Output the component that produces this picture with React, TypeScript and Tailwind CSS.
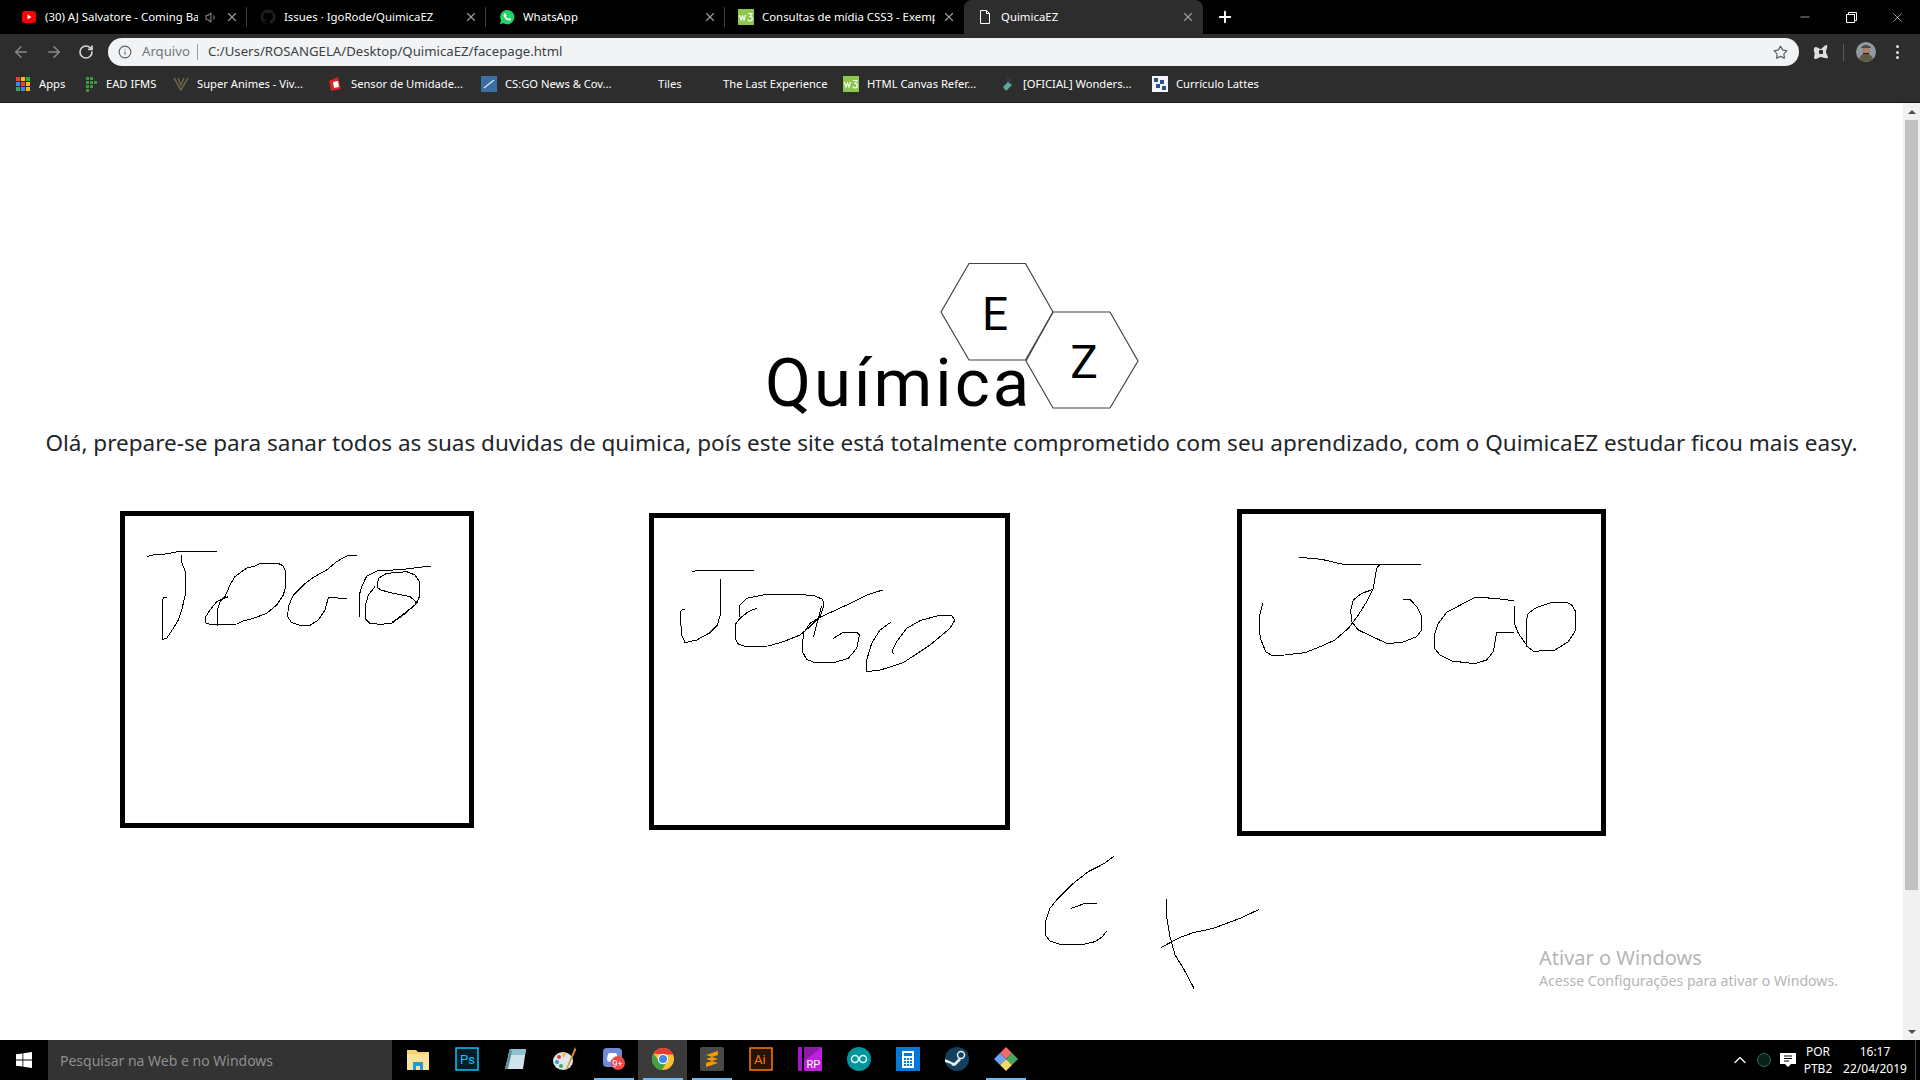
import { ArrowLeft, ArrowRight, RotateCw, Info, Star, X, Plus, Minus, ChevronUp, Volume1 } from "lucide-react";
import type { ReactNode } from "react";

const UI_FONT = "font-['Noto_Sans','Open_Sans',sans-serif]";

// icones pequenos das abas e favoritos
function Youtube() {
  return (
    <svg width="16" height="16" viewBox="0 0 16 16">
      <rect x="1" y="2" width="14" height="12" rx="3" fill="#f00" />
      <path d="M6.5 5.5v5l4-2.5z" fill="#fff" />
    </svg>
  );
}

function Github() {
  return (
    <svg width="16" height="16" viewBox="0 0 16 16" fill="#1e1e1e">
      <path d="M8 .5a7.5 7.5 0 0 0-2.4 14.6c.4.1.5-.2.5-.4v-1.3c-2.1.5-2.500-1-2.500-1-.4-.9-.9-1.100-.9-1.100-.7-.5 0-.5 0-.5.8 0 1.200.8 1.200.8.700 1.200 1.800.8 2.300.6 0-.5.3-.9.5-1.100-1.700-.2-3.400-.8-3.400-3.700 0-.8.3-1.500.8-2-.1-.2-.3-1 .1-2 0 0 .6-.2 2.100.8a7 7 0 0 1 3.800 0c1.500-1 2.100-.8 2.100-.8.400 1 .2 1.800.1 2 .5.500.8 1.200.8 2 0 2.900-1.800 3.500-3.400 3.700.3.200.5.700.5 1.400v2.100c0 .2.100.5.500.4A7.500 7.500 0 0 0 8 .5z" />
    </svg>
  );
}

function Whatsapp() {
  return (
    <svg width="18" height="18" viewBox="0 0 18 18">
      <path d="M1 17l1.200-4.300A8 8 0 1 1 5.300 16z" fill="#25d366" />
      <path d="M6.500 4.800c-.5 0-1.300.7-1.300 2 0 2.700 3.500 6.200 6.300 6.200 1.300 0 2.100-.9 2.100-1.500 0-.4-1.700-1.300-2-1.300s-.7.800-1 .800c-.8 0-2.900-2-2.900-2.800 0-.3.700-.7.700-1 0-.4-.8-2.400-1.900-2.400z" fill="#fff" />
    </svg>
  );
}

function W3({ size = 16 }: { size?: number }) {
  return (
    <svg width={size} height={size} viewBox="0 0 16 16">
      <rect width="16" height="16" fill="#8cc84b" />
      <path d="M1.500 6l1.500 5 1.500-4 1.500 4 1.500-5M10 4.500h4l-2 3c1.500 0 2.300 1 2.300 2.300s-1 2.200-2.300 2.200-2-.7-2.200-1.500" fill="none" stroke="#fff" strokeWidth="1.100" />
    </svg>
  );
}

function Doc() {
  return (
    <svg width="16" height="16" viewBox="0 0 16 16" fill="none" stroke="#fff" strokeWidth="1">
      <path d="M3.500 1.500h6l3 3v10h-9zM9.500 1.500v3h3" />
    </svg>
  );
}

function Tab({ icon, title, active, sep, mute }: { icon: ReactNode; title: string; active?: boolean; sep?: boolean; mute?: boolean }) {
  return (
    <div
      className={`flex h-[34px] w-[239px] items-center gap-[7px] pl-[13px] text-[11.4px] text-white ${
        active ? "rounded-t-lg bg-[#2d2d2d]" : ""
      }`}
    >
      <span className="flex w-[16px] shrink-0 justify-center">{icon}</span>
      <span className="ml-[1px] flex-1 overflow-hidden whitespace-nowrap">{title}</span>
      {mute && <Volume1 size={13} className="text-[#888]" />}
      <X size={14} className="shrink-0 text-[#9a9a9a]" strokeWidth={2} />
      <span className="-ml-[7px] flex w-[8px] shrink-0 justify-end">
        {sep && <span className="h-[20px] w-px bg-[#3f3f3f]" />}
      </span>
    </div>
  );
}

function TabStrip() {
  return (
    <div className="flex h-[34px] items-center bg-black pl-[8px]">
      <Tab icon={<Youtube />} title="(30) AJ Salvatore - Coming Back" sep mute />
      <Tab icon={<Github />} title="Issues · IgoRode/QuimicaEZ" sep />
      <Tab icon={<Whatsapp />} title="WhatsApp" sep />
      <Tab icon={<W3 />} title="Consultas de mídia CSS3 - Exemplos" />
      <Tab icon={<Doc />} title="QuimicaEZ" active />
      <Plus size={18} strokeWidth={2.5} className="ml-[13px] text-white" />
      <div className="ml-auto flex items-center text-white">
        <span className="flex w-[46px] justify-center"><Minus size={14} strokeWidth={1} /></span>
        <span className="flex w-[46px] justify-center">
          <svg width="11" height="11" viewBox="0 0 11 11" fill="none" stroke="#fff">
            <path d="M.5 2.500h8v8h-8zM2.500 2.500v-2h8v8h-2" />
          </svg>
        </span>
        <span className="flex w-[46px] justify-center"><X size={15} strokeWidth={1} /></span>
      </div>
    </div>
  );
}

function Toolbar() {
  return (
    <div className="flex h-[34px] items-center bg-[#2d2d2d] pl-[12px] pt-[2px]">
      <ArrowLeft size={18} className="text-[#8a8a8a]" />
      <ArrowRight size={18} className="ml-[15px] text-[#8a8a8a]" />
      <RotateCw size={16} strokeWidth={2.5} className="ml-[15px] text-[#d5d5d5]" />
      <div className="ml-[14px] flex h-[28px] w-[1691px] items-center rounded-full bg-[#f1f3f4] pl-[10px] pr-[11px] text-[13px]">
        <Info size={14} className="text-[#5f6368]" />
        <span className="ml-[10px] text-[13.2px] text-[#70757a]">Arquivo</span>
        <span className="ml-[7px] h-[16px] w-px bg-[#9aa0a6]" />
        <span className="ml-[10px] text-[13.2px] text-[#3c4043]">C:/Users/ROSANGELA/Desktop/QuimicaEZ/facepage.html</span>
        <Star size={15} className="ml-auto text-[#5f6368]" />
      </div>
      <svg width="18" height="18" viewBox="0 0 18 18" className="ml-[13px]">
        <path d="M3 4c3 0 4 2 6 2 2-1 3-4 6-4 1 2-1 5-1 7s2 3 2 6c-3 1-5-1-7-1s-3 2-6 2c-2-1 0-4-.5-6S1 6 3 4z" fill="#ddd" />
        <rect x="7" y="7" width="4" height="4" rx="1" fill="#2d2d2d" />
      </svg>
      <span className="ml-[13px] h-[17px] w-px bg-[#5a5a5a]" />
      <svg width="20" height="20" viewBox="0 0 20 20" className="ml-[12px]">
        <circle cx="10" cy="10" r="10" fill="#8f9aa5" />
        <path d="M3 17c1-4 4-5 7-5s6 1 7 5a10 10 0 0 1-14 0z" fill="#5d5c42" />
        <circle cx="10" cy="9" r="4" fill="#a9816b" />
        <path d="M5 6c1-4 9-4 10 0z" fill="#4a4d3b" />
        <path d="M7 11h6v1.500H7z" fill="#2b1f1a" />
      </svg>
      <span className="ml-[20px] flex flex-col gap-[2.500px]">
        <span className="h-[3px] w-[3px] rounded-full bg-[#ddd]" />
        <span className="h-[3px] w-[3px] rounded-full bg-[#ddd]" />
        <span className="h-[3px] w-[3px] rounded-full bg-[#ddd]" />
      </span>
    </div>
  );
}

const APPS_COLORS = ["#ea4335", "#fbbc05", "#34a853", "#4285f4", "#ea4335", "#fbbc05", "#34a853", "#4285f4", "#fbbc05"];

function AppsIcon() {
  return (
    <span className="grid grid-cols-3 gap-[1px]">
      {APPS_COLORS.map((c, i) => (
        <span key={i} className="h-[4px] w-[4px]" style={{ backgroundColor: c }} />
      ))}
    </span>
  );
}

const BOOKMARKS: { w: string; label: string; icon?: ReactNode }[] = [
  { w: "w-[67px]", label: "Apps", icon: <AppsIcon /> },
  {
    w: "w-[91px]",
    label: "EAD IFMS",
    icon: (
      <svg width="14" height="16" viewBox="0 0 14 16" fill="#3c9a3f">
        <path d="M3 1h3v3H3zM7 1h3v3H7zM3 5h3v3H3zM7 5h3v3H7zM11 5h3v3h-3zM3 9h3v3H3zM7 9h3v3H7zM3 13h3v3H3z" />
      </svg>
    ),
  },
  {
    w: "w-[154px]",
    label: "Super Animes - Viv...",
    icon: (
      <svg width="16" height="16" viewBox="0 0 16 16" fill="none" stroke="#6d6444" strokeWidth="1.500">
        <path d="M1 2l7 12 7-12M5 2l3 7 3-7" />
      </svg>
    ),
  },
  {
    w: "w-[154px]",
    label: "Sensor de Umidade...",
    icon: (
      <svg width="16" height="16" viewBox="0 0 16 16">
        <path d="M2 5l9-4 3 12-10 2z" fill="#d8232a" />
        <path d="M6 6l5-1 1 6-5 1z" fill="#fff" />
      </svg>
    ),
  },
  {
    w: "w-[177px]",
    label: "CS:GO News & Cov...",
    icon: (
      <svg width="16" height="16" viewBox="0 0 16 16">
        <rect width="16" height="16" fill="#3a6ea5" />
        <path d="M3 12l10-8" stroke="#dfe8f2" strokeWidth="1.300" />
      </svg>
    ),
  },
  { w: "w-[65px]", label: "Tiles" },
  { w: "w-[120px]", label: "The Last Experience" },
  { w: "w-[156px]", label: "HTML Canvas Refer...", icon: <W3 /> },
  {
    w: "w-[153px]",
    label: "[OFICIAL] Wonders...",
    icon: (
      <svg width="16" height="16" viewBox="0 0 16 16">
        <path d="M8 1l5 4-5 4z" fill="#2f3d4a" />
        <path d="M9 6l4 3-6 6-3-4z" fill="#5da89c" />
      </svg>
    ),
  },
  {
    w: "w-[110px]",
    label: "Currículo Lattes",
    icon: (
      <svg width="16" height="16" viewBox="0 0 16 16">
        <rect width="16" height="16" fill="#f4f6fa" />
        <path d="M2 2h4v4H2zM8 4h4v4H8zM4 8h4v4H4zM10 10h4v4h-4z" fill="#27508f" />
      </svg>
    ),
  },
];

function BookmarksBar() {
  return (
    <div className="flex h-[35px] items-center border-b border-[#1b1b1b] bg-[#2d2d2d] pb-[2px] pl-[15px] text-[11.2px] text-white">
      {BOOKMARKS.map((b) => (
        <div key={b.label} className={`flex shrink-0 items-center gap-[8px] ${b.w}`}>
          {b.icon && <span className="flex w-[16px] justify-center">{b.icon}</span>}
          <span className="whitespace-nowrap">{b.label}</span>
        </div>
      ))}
    </div>
  );
}

function Logo() {
  return (
    <svg width="400" height="155" viewBox="760 260 400 155" className="ml-[760px] block overflow-visible">
      <path d="M969 263.500h56.500L1053 312l-27.500 48H969l-28-48z" fill="none" stroke="#444" strokeWidth="1.200" />
      <path d="M1053 312h57l28 49-28 47h-57l-27-47z" fill="none" stroke="#444" strokeWidth="1.200" />
      <text x="995" y="330" textAnchor="middle" fontFamily="Roboto, sans-serif" fontSize="46" fill="#000">E</text>
      <text x="1084" y="378" textAnchor="middle" fontFamily="Roboto, sans-serif" fontSize="46" fill="#000">Z</text>
      <text x="765" y="406" fontFamily="Roboto, sans-serif" fontSize="67" letterSpacing="3" fill="#000">Química</text>
    </svg>
  );
}

function Sketch({ box, view, children }: { box: string; view: string; children: ReactNode }) {
  return (
    <div className={`shrink-0 border-[5px] border-black ${box}`}>
      <svg viewBox={view} className="block h-full w-full" fill="none" stroke="#000" strokeWidth="3" shapeRendering="crispEdges">
        {children}
      </svg>
    </div>
  );
}

function Page() {
  return (
    <main className={`min-w-0 flex-1 overflow-hidden bg-white pt-[157px] ${UI_FONT}`}>
      <Logo />
      <p className="mt-[10px] whitespace-nowrap text-center text-[22.5px] leading-[36px] text-[#212529]">
        Olá, prepare-se para sanar todos as suas duvidas de quimica, poís este site está totalmente comprometido com seu aprendizado, com o QuimicaEZ estudar ficou mais easy.
      </p>
      <div className="mt-[48px] flex items-start pl-[120px]">
        <Sketch box="mt-[2px] h-[317px] w-[354px]" view="45 48 1032 921">
          <path d="M110 170L130 165L165 162L205 155L320 154" />
          <path d="M213 165L216 190L226 215L226 285L215 330L205 360L190 385L170 415L157 418L157 300L162 292L170 291" />
          <path d="M355 290L320 305L300 330L286 352L288 370L300 373L380 372L400 363L430 355L470 340L500 315L520 285L527 260L527 215L520 198L505 190L450 190L430 200L412 203L395 215L375 230L360 255L345 290L330 305L322 330L322 378" />
          <path d="M740 166L710 168L680 185L650 210L610 232L580 255L550 285L535 320L533 350L545 368L570 376L600 376L625 360L645 330L655 293L710 295" />
          <path d="M962 198L880 208L800 213L770 228L755 260L748 285L748 350" />
          <path d="M795 260L775 285L765 320L765 355L780 370L810 373L845 370L880 345L920 310L928 290L928 245L915 225L890 215L830 220L805 235L802 262L812 270L850 280L900 290L918 305L915 315L870 350L845 368" />
        </Sketch>
        <Sketch box="ml-[175px] mt-[4px] h-[317px] w-[361px]" view="42 54 1053 921">
          <path d="M157 216L170 211L342 211" />
          <path d="M242 236L242 340L232 375L210 398L170 420L135 428L125 405L120 340L125 330L135 327" />
          <path d="M352 324L325 335L300 355L285 375L285 415L295 432L315 439L385 438L430 425L480 405L510 380L540 350L552 315L548 298L525 288L480 283L375 284L320 295L300 315L299 350" />
          <path d="M728 270L680 285L620 315L540 352L510 370L490 400L487 455L500 478L525 488L585 487L625 475L650 445L658 405L650 397L610 397L580 415" />
          <path d="M545 318L535 355L520 412" />
          <path d="M752 367L720 390L695 430L680 480L680 514L715 512L790 488L870 435L930 385L945 360L935 347L890 348L840 362L800 385L770 425L757 450L760 463" />
        </Sketch>
        <Sketch box="ml-[227px] h-[327px] w-[369px]" view="51 42 1077 951">
          <path d="M222 172L290 178L350 192L588 192" />
          <path d="M463 195L455 205L445 265L425 305L400 345L370 385L330 420L290 438L240 458L180 465L140 466L122 455L108 420L103 395L103 350L113 310" />
          <path d="M445 268L410 280L385 300L377 330L380 365L400 390L485 430L530 428L575 410L590 390L590 350L575 320L555 298L532 297" />
          <path d="M866 302L810 295L750 292L665 337L640 370L628 405L628 445L645 465L680 483L750 491L785 480L805 455L815 398L866 398" />
          <path d="M868 318L870 375L880 400L908 440L925 454L990 450L1030 425L1050 395L1052 335L1040 315L1025 307L980 307L935 322L910 340L904 360L904 440" />
        </Sketch>
      </div>
      <svg width="260" height="160" viewBox="0 0 780 480" fill="none" stroke="#000" strokeWidth="3" shapeRendering="crispEdges" className="ml-[1020px] mt-[4px] block">
        <path d="M283 48L250 72L205 95L160 130L110 180L90 205L76 245L76 285L90 303L120 313L190 313L225 305L245 292L260 274" />
        <path d="M153 205L190 192L233 189" />
        <path d="M438 177L440 230L450 290L465 345L490 385L522 445" />
        <path d="M424 322L480 292L520 278L580 265L660 235L718 208" />
      </svg>
    </main>
  );
}

function Scrollbar() {
  return (
    <div className="flex w-[17px] shrink-0 flex-col items-center bg-[#f1f1f1]">
      <div className="flex h-[17px] items-center justify-center">
        <span className="h-0 w-0 border-x-[4px] border-b-[4px] border-x-transparent border-b-[#505050]" />
      </div>
      <div className="h-[770px] w-[13px] bg-[#c1c1c1]" />
      <div className="mt-auto flex h-[17px] items-center justify-center">
        <span className="h-0 w-0 border-x-[4px] border-t-[4px] border-x-transparent border-t-[#505050]" />
      </div>
    </div>
  );
}

const TASK_ICONS: { key: string; icon: ReactNode; on?: boolean; active?: boolean }[] = [
  {
    key: "explorer",
    icon: (
      <svg width="24" height="24" viewBox="0 0 24 24">
        <path d="M1 3h9l2 2h11v18H1z" fill="#f6d36b" />
        <path d="M1 7h22v16H1z" fill="#fbe49a" />
        <path d="M7 15h10v8h-3v-4h-4v4H7z" fill="#1e9be0" />
      </svg>
    ),
  },
  {
    key: "ps",
    icon: (
      <svg width="24" height="24" viewBox="0 0 24 24">
        <rect x="1" y="1" width="22" height="22" fill="#001d26" stroke="#00c8ff" strokeWidth="1.500" />
        <text x="5" y="17" fontSize="13" fontFamily="Roboto, sans-serif" fill="#00c8ff">Ps</text>
      </svg>
    ),
  },
  {
    key: "notepad",
    icon: (
      <svg width="24" height="24" viewBox="0 0 24 24">
        <path d="M6 2h16l-3 20H1z" fill="#cfe3ea" />
        <path d="M6 2h16l-1 6H4z" fill="#8fc0cf" />
        <path d="M1 22L6 2l2 2-4 18z" fill="#5c8c9b" />
      </svg>
    ),
  },
  {
    key: "paint",
    icon: (
      <svg width="26" height="26" viewBox="0 0 26 26">
        <ellipse cx="11" cy="15" rx="10" ry="9" fill="#dfe6ea" />
        <circle cx="7" cy="11" r="2" fill="#e23b3b" />
        <circle cx="12" cy="9" r="2" fill="#f2c230" />
        <circle cx="5" cy="16" r="2" fill="#2f9ae0" />
        <circle cx="9" cy="20" r="2" fill="#3aaf52" />
        <path d="M23 1l1 3-9 20-1-1z" fill="#d69339" />
      </svg>
    ),
  },
  {
    key: "discord",
    on: true,
    icon: (
      <span className="relative block h-[24px] w-[24px]">
        <svg width="22" height="22" viewBox="0 0 22 22">
          <rect x="1" y="1" width="19" height="19" rx="4" fill="#7289da" />
          <path d="M5 13c0-3 1-6 2-7h7c1 1 2 4 2 7-1 1-2 2-3 2l-1-2H9l-1 2c-1 0-2-1-3-2z" fill="#fff" />
        </svg>
        <span className="absolute left-[9px] top-[9px] flex h-[14px] w-[14px] items-center justify-center rounded-full bg-[#f04747] text-[9px] leading-none text-white">9+</span>
      </span>
    ),
  },
  {
    key: "chrome",
    on: true,
    active: true,
    icon: (
      <svg width="24" height="24" viewBox="0 0 24 24">
        <circle cx="12" cy="12" r="11" fill="#fbc02d" />
        <path d="M2.500 6.500A11 11 0 0 1 22 7.500H12z" fill="#e53935" />
        <path d="M2.500 6.500A11 11 0 0 0 11 23l5-8.500-8-.5z" fill="#43a047" />
        <circle cx="12" cy="12" r="5.200" fill="#fff" />
        <circle cx="12" cy="12" r="4" fill="#4285f4" />
      </svg>
    ),
  },
  {
    key: "sublime",
    on: true,
    icon: (
      <svg width="24" height="24" viewBox="0 0 24 24">
        <rect width="24" height="24" rx="2" fill="#4a4a4a" />
        <path d="M6 8l12-4v4L6 12zM18 12L6 8v4l12 4zM6 16l12-4v4L6 20z" fill="#ff9800" />
      </svg>
    ),
  },
  {
    key: "ai",
    icon: (
      <svg width="24" height="24" viewBox="0 0 24 24">
        <rect x="1" y="1" width="22" height="22" fill="#261300" stroke="#ff7c00" strokeWidth="1.500" />
        <text x="5" y="17" fontSize="13" fontFamily="Roboto, sans-serif" fill="#ff7c00">Ai</text>
      </svg>
    ),
  },
  {
    key: "rp",
    icon: (
      <svg width="24" height="24" viewBox="0 0 24 24">
        <rect width="4" height="24" rx="1" fill="#a516c8" />
        <rect x="6" width="18" height="24" rx="1" fill="#c01fe0" />
        <path d="M6 0h18L6 14z" fill="#8f18a8" />
        <text x="8.500" y="21" fontSize="11" fontFamily="Roboto, sans-serif" fill="#fff">RP</text>
      </svg>
    ),
  },
  {
    key: "arduino",
    icon: (
      <svg width="24" height="24" viewBox="0 0 24 24">
        <circle cx="12" cy="12" r="12" fill="#00979c" />
        <circle cx="8" cy="12" r="3.500" fill="none" stroke="#e6f7f7" strokeWidth="1.500" />
        <circle cx="16" cy="12" r="3.500" fill="none" stroke="#e6f7f7" strokeWidth="1.500" />
      </svg>
    ),
  },
  {
    key: "calc",
    icon: (
      <svg width="24" height="24" viewBox="0 0 24 24">
        <rect width="24" height="24" fill="#0078d7" />
        <rect x="6" y="4" width="12" height="17" fill="#fff" />
        <path d="M8 6h8v3H8z" fill="#0078d7" />
        <path d="M8 11h2v2H8zM11 11h2v2h-2zM14 11h2v2h-2zM8 14h2v2H8zM11 14h2v2h-2zM14 14h2v2h-2zM8 17h2v2H8zM11 17h2v2h-2zM14 17h2v2h-2z" fill="#0078d7" />
      </svg>
    ),
  },
  {
    key: "steam",
    icon: (
      <svg width="24" height="24" viewBox="0 0 24 24">
        <circle cx="12" cy="12" r="12" fill="#14405f" />
        <circle cx="16" cy="8" r="3.500" fill="none" stroke="#e8eef2" strokeWidth="1.500" />
        <path d="M0 12l9 4 5-5 2 2-5 5a3 3 0 0 1-5-1l-6-2z" fill="#e8eef2" />
      </svg>
    ),
  },
  {
    key: "gitkraken",
    on: true,
    icon: (
      <svg width="24" height="24" viewBox="0 0 24 24">
        <path d="M12 0l6 6-6 6-6-6z" fill="#f06a6a" />
        <path d="M6 6l6 6-6 6-6-6z" fill="#6aa5f0" />
        <path d="M18 6l6 6-6 6-6-6z" fill="#48a860" />
        <path d="M12 12l6 6-6 6-6-6z" fill="#f0d86a" />
      </svg>
    ),
  },
];

function Taskbar() {
  return (
    <div className={`flex h-[40px] items-center bg-black text-white ${UI_FONT}`}>
      <div className="flex w-[48px] justify-center">
        <svg width="16" height="16" viewBox="0 0 16 16" fill="#fff">
          <path d="M0 2.300l6.500-.9v6.200H0zM7.300 1.300L16 0v7.600H7.300zM0 8.400h6.500v6.200L0 13.700zM7.300 8.400H16V16l-8.700-1.200z" />
        </svg>
      </div>
      <div className="flex h-full w-[344px] items-center bg-[#333] pl-[12px] text-[14px] text-[#8f8f8f]">Pesquisar na Web e no Windows</div>
      <div className="ml-[1px] flex h-full">
        {TASK_ICONS.map((t) => (
          <div key={t.key} className={`flex h-full w-[49px] flex-col items-center ${t.active ? "bg-[#3a3a3a]" : ""}`}>
            <div className="flex flex-1 items-center justify-center">{t.icon}</div>
            <span className={`h-[2px] w-[40px] ${t.on ? "bg-[#76b9ed]" : ""}`} />
          </div>
        ))}
      </div>
      <div className="ml-auto flex h-full items-center text-[12px] leading-[17px]">
        <ChevronUp size={20} strokeWidth={1.500} className="text-white" />
        <span className="ml-[7px] h-[14px] w-[14px] rounded-full border border-[#2b6b50] bg-[#0a2018]" />
        <svg width="16" height="16" viewBox="0 0 16 16" className="ml-[9px]">
          <path d="M0 1h16v11h-5l-3 3-3-3H0z" fill="#fff" />
          <path d="M4 4h8M4 6.500h8M4 9h5" stroke="#000" />
        </svg>
        <div className="ml-[4px] flex w-[36px] flex-col items-center"><span>POR</span><span>PTB2</span></div>
        <div className="ml-[4px] flex w-[70px] flex-col items-center"><span>16:17</span><span>22/04/2019</span></div>
        <span className="ml-[5px] h-full w-px bg-[#4a4a4a]" />
        <span className="w-[4px]" />
      </div>
    </div>
  );
}

export default function App() {
  return (
    <div className="flex h-[1080px] w-[1920px] flex-col overflow-hidden bg-white">
      <div className={UI_FONT}>
        <TabStrip />
        <Toolbar />
        <BookmarksBar />
      </div>
      <div className="relative flex min-h-0 flex-1">
        <Page />
        <Scrollbar />
        {/* marca d'agua do windows */}
        <div className={`absolute left-[1539px] top-[841px] text-[#b5b5b5] ${UI_FONT}`}>
          <div className="text-[20px] leading-[28px]">Ativar o Windows</div>
          <div className="text-[14.1px] leading-[18px]">Acesse Configurações para ativar o Windows.</div>
        </div>
      </div>
      <Taskbar />
    </div>
  );
}
